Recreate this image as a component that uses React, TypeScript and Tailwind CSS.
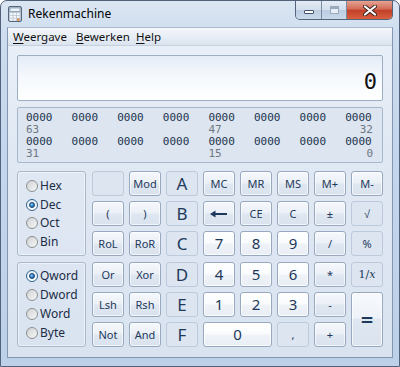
import React from 'react';

type Kind = 'op' | 'num' | 'dis' | 'hex' | 'eq';

type Key = {
  label: React.ReactNode;
  kind: Kind;
  span?: string;
};

const kindClass: Record<Kind, string> = {
  op: 'border-[#98a9bf] bg-[linear-gradient(180deg,#f5f8fc_0%,#ebf0f7_48%,#dfe7f1_52%,#d9e2ee_100%)] shadow-[inset_0_0_0_1px_rgba(255,255,255,0.65)]',
  num: 'border-[#98a9bf] bg-[linear-gradient(180deg,#ffffff_0%,#f9fbfd_48%,#eff3f8_52%,#e9eef5_100%)] shadow-[inset_0_0_0_1px_rgba(255,255,255,0.8)]',
  eq: 'border-[#98a9bf] bg-[linear-gradient(180deg,#f7f9fc_0%,#eef3f9_47%,#dfe7f1_49%,#dae3ee_100%)] shadow-[inset_0_0_0_1px_rgba(255,255,255,0.7)]',
  dis: 'border-[#bccadb] bg-[#dce5f0]',
  hex: 'border-[#bccadb] bg-[#dce5f0]',
};

const Backspace = () => (
  <svg width="18" height="8" viewBox="0 0 18 8">
    <path d="M4 4 H17" stroke="#1e395b" strokeWidth="2" />
    <path d="M0 4 L5.5 0.5 L5.5 7.5 Z" fill="#1e395b" />
  </svg>
);

const keys: Key[] = [
  { label: '', kind: 'dis' },
  { label: 'Mod', kind: 'op' },
  { label: 'A', kind: 'hex' },
  { label: 'MC', kind: 'op' },
  { label: 'MR', kind: 'op' },
  { label: 'MS', kind: 'op' },
  { label: 'M+', kind: 'op' },
  { label: 'M-', kind: 'op' },

  { label: '(', kind: 'op' },
  { label: ')', kind: 'op' },
  { label: 'B', kind: 'hex' },
  { label: <Backspace />, kind: 'op' },
  { label: 'CE', kind: 'op' },
  { label: 'C', kind: 'op' },
  { label: '±', kind: 'op' },
  { label: '√', kind: 'dis' },

  { label: 'RoL', kind: 'op' },
  { label: 'RoR', kind: 'op' },
  { label: 'C', kind: 'hex' },
  { label: '7', kind: 'num' },
  { label: '8', kind: 'num' },
  { label: '9', kind: 'num' },
  { label: '/', kind: 'op' },
  { label: '%', kind: 'dis' },

  { label: 'Or', kind: 'op' },
  { label: 'Xor', kind: 'op' },
  { label: 'D', kind: 'hex' },
  { label: '4', kind: 'num' },
  { label: '5', kind: 'num' },
  { label: '6', kind: 'num' },
  { label: '*', kind: 'op' },
  {
    label: (
      <span className="font-['DejaVu_Serif',serif] text-[11px]">
        1/<i>x</i>
      </span>
    ),
    kind: 'dis',
  },

  { label: 'Lsh', kind: 'op' },
  { label: 'Rsh', kind: 'op' },
  { label: 'E', kind: 'hex' },
  { label: '1', kind: 'num' },
  { label: '2', kind: 'num' },
  { label: '3', kind: 'num' },
  { label: '-', kind: 'op' },
  { label: '=', kind: 'eq', span: 'row-span-2' },

  { label: 'Not', kind: 'op' },
  { label: 'And', kind: 'op' },
  { label: 'F', kind: 'hex' },
  { label: '0', kind: 'num', span: 'col-span-2' },
  { label: ',', kind: 'dis' },
  { label: '+', kind: 'op' },
];

const labelSize = (k: Key) => {
  if (k.kind === 'num') return 'text-[15px]';
  if (k.kind === 'hex') return 'text-[17px]';
  if (k.kind === 'eq') return 'text-[22px] font-semibold';
  return 'text-[11px]';
};

const Radio = ({ label, checked }: { label: string; checked?: boolean }) => (
  <div className="flex items-center h-[18.7px]">
    <span
      className={
        'w-[12px] h-[12px] rounded-full border flex items-center justify-center ' +
        (checked
          ? 'border-[#2c628b] bg-[linear-gradient(180deg,#e6eef7,#ffffff)]'
          : 'border-[#8e8f8f] bg-[linear-gradient(135deg,#cfd2d5,#f6f6f6)]')
      }
    >
      {checked && (
        <span className="w-[6px] h-[6px] rounded-full bg-[radial-gradient(circle_at_40%_35%,#8fd0ff,#1a66b5_70%)] border border-[#12406f]" />
      )}
    </span>
    <span className="ml-[2px] text-[12px] text-[#1b2c45]">{label}</span>
  </div>
);

const GroupBox = ({ items, selected }: { items: string[]; selected: string }) => (
  <div className="rounded-[3px] border border-[#a9b9cc] shadow-[inset_0_0_0_1px_rgba(255,255,255,0.5)] pl-[8px] pt-[4.5px]">
    {items.map((i) => (
      <Radio key={i} label={i} checked={i === selected} />
    ))}
  </div>
);

const bits = [
  ['63', '', '', '', '47', '', '', '32'],
  ['31', '', '', '', '15', '', '', '0'],
];

const CalcIcon = () => (
  <svg width="14" height="16" viewBox="0 0 14 16">
    <rect x="0.5" y="0.5" width="13" height="15" rx="1.5" fill="#b9c7d6" stroke="#56677c" />
    <rect x="2" y="2" width="10" height="3.5" fill="#e9f3fb" stroke="#6e8298" strokeWidth="0.6" />
    {[0, 1, 2].map((r) =>
      [0, 1, 2].map((c) => (
        <rect key={r + '-' + c} x={2 + c * 3.5} y={7 + r * 2.8} width="2.6" height="2" fill={c === 2 && r === 2 ? '#e38a3a' : '#f5f7fa'} />
      ))
    )}
  </svg>
);

export default function App() {
  return (
    <div className="w-[400px] h-[367px] overflow-hidden rounded-t-[7px] border border-[#52627a] bg-[linear-gradient(180deg,#dbe6f3_0%,#cddcee_10%,#c4d6ec_40%,#bcd0e8_100%)] font-['Noto_Sans',sans-serif] flex flex-col">
      {/* title bar */}
      <div className="h-[26px] flex items-start shrink-0">
        <div className="flex items-center h-[26px] pl-[7px]">
          <CalcIcon />
          <span className="ml-[6px] text-[12px] text-black">Rekenmachine</span>
        </div>
        <div className="ml-auto mr-[6px] flex h-[19px] rounded-b-[5px] overflow-hidden border border-t-0 border-[#54647b]">
          <div className="w-[26px] flex items-center justify-center bg-[linear-gradient(180deg,#e3ecf6_0%,#d2deec_50%,#bccde2_52%,#c9d8ea_100%)] border-r border-[#7b8ca2]">
            <span className="mt-[4px] w-[10px] h-[4px] bg-white border border-[#43536a] rounded-[1px]" />
          </div>
          <div className="w-[25px] flex items-center justify-center bg-[linear-gradient(180deg,#e3ecf6_0%,#d2deec_50%,#bccde2_52%,#c9d8ea_100%)] border-r border-[#7b8ca2]">
            <span className="w-[9px] h-[8px] border border-[#9aa9bb] bg-[#e8eef6] shadow-[inset_0_2px_0_#9aa9bb]" />
          </div>
          <div className="w-[45px] flex items-center justify-center bg-[linear-gradient(180deg,#e6a393_0%,#d26a55_45%,#c1402a_52%,#d8603f_100%)]">
            <svg width="14" height="11" viewBox="0 0 14 11">
              <path d="M2 1.5 L12 9.5 M12 1.5 L2 9.5" stroke="#3d2622" strokeWidth="4" strokeLinecap="round" />
              <path d="M2 1.5 L12 9.5 M12 1.5 L2 9.5" stroke="#ffffff" strokeWidth="2.2" strokeLinecap="round" />
            </svg>
          </div>
        </div>
      </div>

      {/* client area */}
      <div className="mx-[6px] flex-1 flex flex-col border border-[#8397b2] border-t-[#a9bad0] bg-[linear-gradient(180deg,#eaf0f8_0%,#e0e8f3_40%,#d9e3f0_100%)]">
        {/* menu */}
        <div className="h-[18px] flex items-center text-[11.5px] text-[#111] bg-[linear-gradient(180deg,#f3f6fa_0%,#e6ecf4_60%,#dbe3ee_100%)] border-b border-[#c4d1e1] pl-[5px]">
          <span className="w-[63px]">
            <span className="underline underline-offset-2">W</span>eergave
          </span>
          <span className="w-[60px]">
            <span className="underline underline-offset-2">B</span>ewerken
          </span>
          <span>
            <span className="underline underline-offset-2">H</span>elp
          </span>
        </div>

        <div className="flex-1 px-[9px] pt-[9px] flex flex-col">
          {/* display */}
          <div className="h-[46px] rounded-[2px] border border-[#9daec3] bg-[linear-gradient(180deg,#e4ecf7_0%,#f4f8fc_45%,#ffffff_100%)] flex items-end justify-end pr-[5px] pb-[7px]">
            <span className="font-['DejaVu_Sans_Mono',monospace] text-[22px] leading-none text-[#111]">0</span>
          </div>

          {/* bit panel */}
          <div className="mt-[6px] h-[56px] rounded-[2px] border border-[#a8b8cc] bg-[#dce5f0] px-[8px] pt-[4px] font-['DejaVu_Sans_Mono',monospace] text-[11px] leading-[12px]">
            {bits.map((row, ri) => (
              <div key={ri}>
                <div className="grid grid-cols-[repeat(7,45.6px)_1fr] text-[#22344d]">
                  {row.map((_, i) => (
                    <span key={i}>0000</span>
                  ))}
                </div>
                <div className="grid grid-cols-[repeat(7,45.6px)_1fr] text-[#6f7884]">
                  {row.map((l, i) => (
                    <span key={i} className={i === 7 ? 'text-right pr-[1px]' : ''}>
                      {l}
                    </span>
                  ))}
                </div>
              </div>
            ))}
          </div>

          {/* keys */}
          <div className="mt-[8px] flex gap-[6px]">
            <div className="w-[69px] grid grid-rows-2 gap-[5.2px] h-[176px]">
              <GroupBox items={['Hex', 'Dec', 'Oct', 'Bin']} selected="Dec" />
              <GroupBox items={['Qword', 'Dword', 'Word', 'Byte']} selected="Qword" />
            </div>
            <div className="grid grid-cols-[repeat(8,32px)] grid-rows-[repeat(6,25px)] gap-x-[5px] gap-y-[5.2px]">
              {keys.map((k, i) => (
                <div
                  key={i}
                  className={
                    'rounded-[3px] border flex items-center justify-center text-[#1e395b] leading-none ' +
                    kindClass[k.kind] +
                    ' ' +
                    labelSize(k) +
                    ' ' +
                    (k.span ?? '')
                  }
                >
                  {k.label}
                </div>
              ))}
            </div>
          </div>
        </div>
      </div>
      <div className="h-[8px] shrink-0" />
    </div>
  );
}
